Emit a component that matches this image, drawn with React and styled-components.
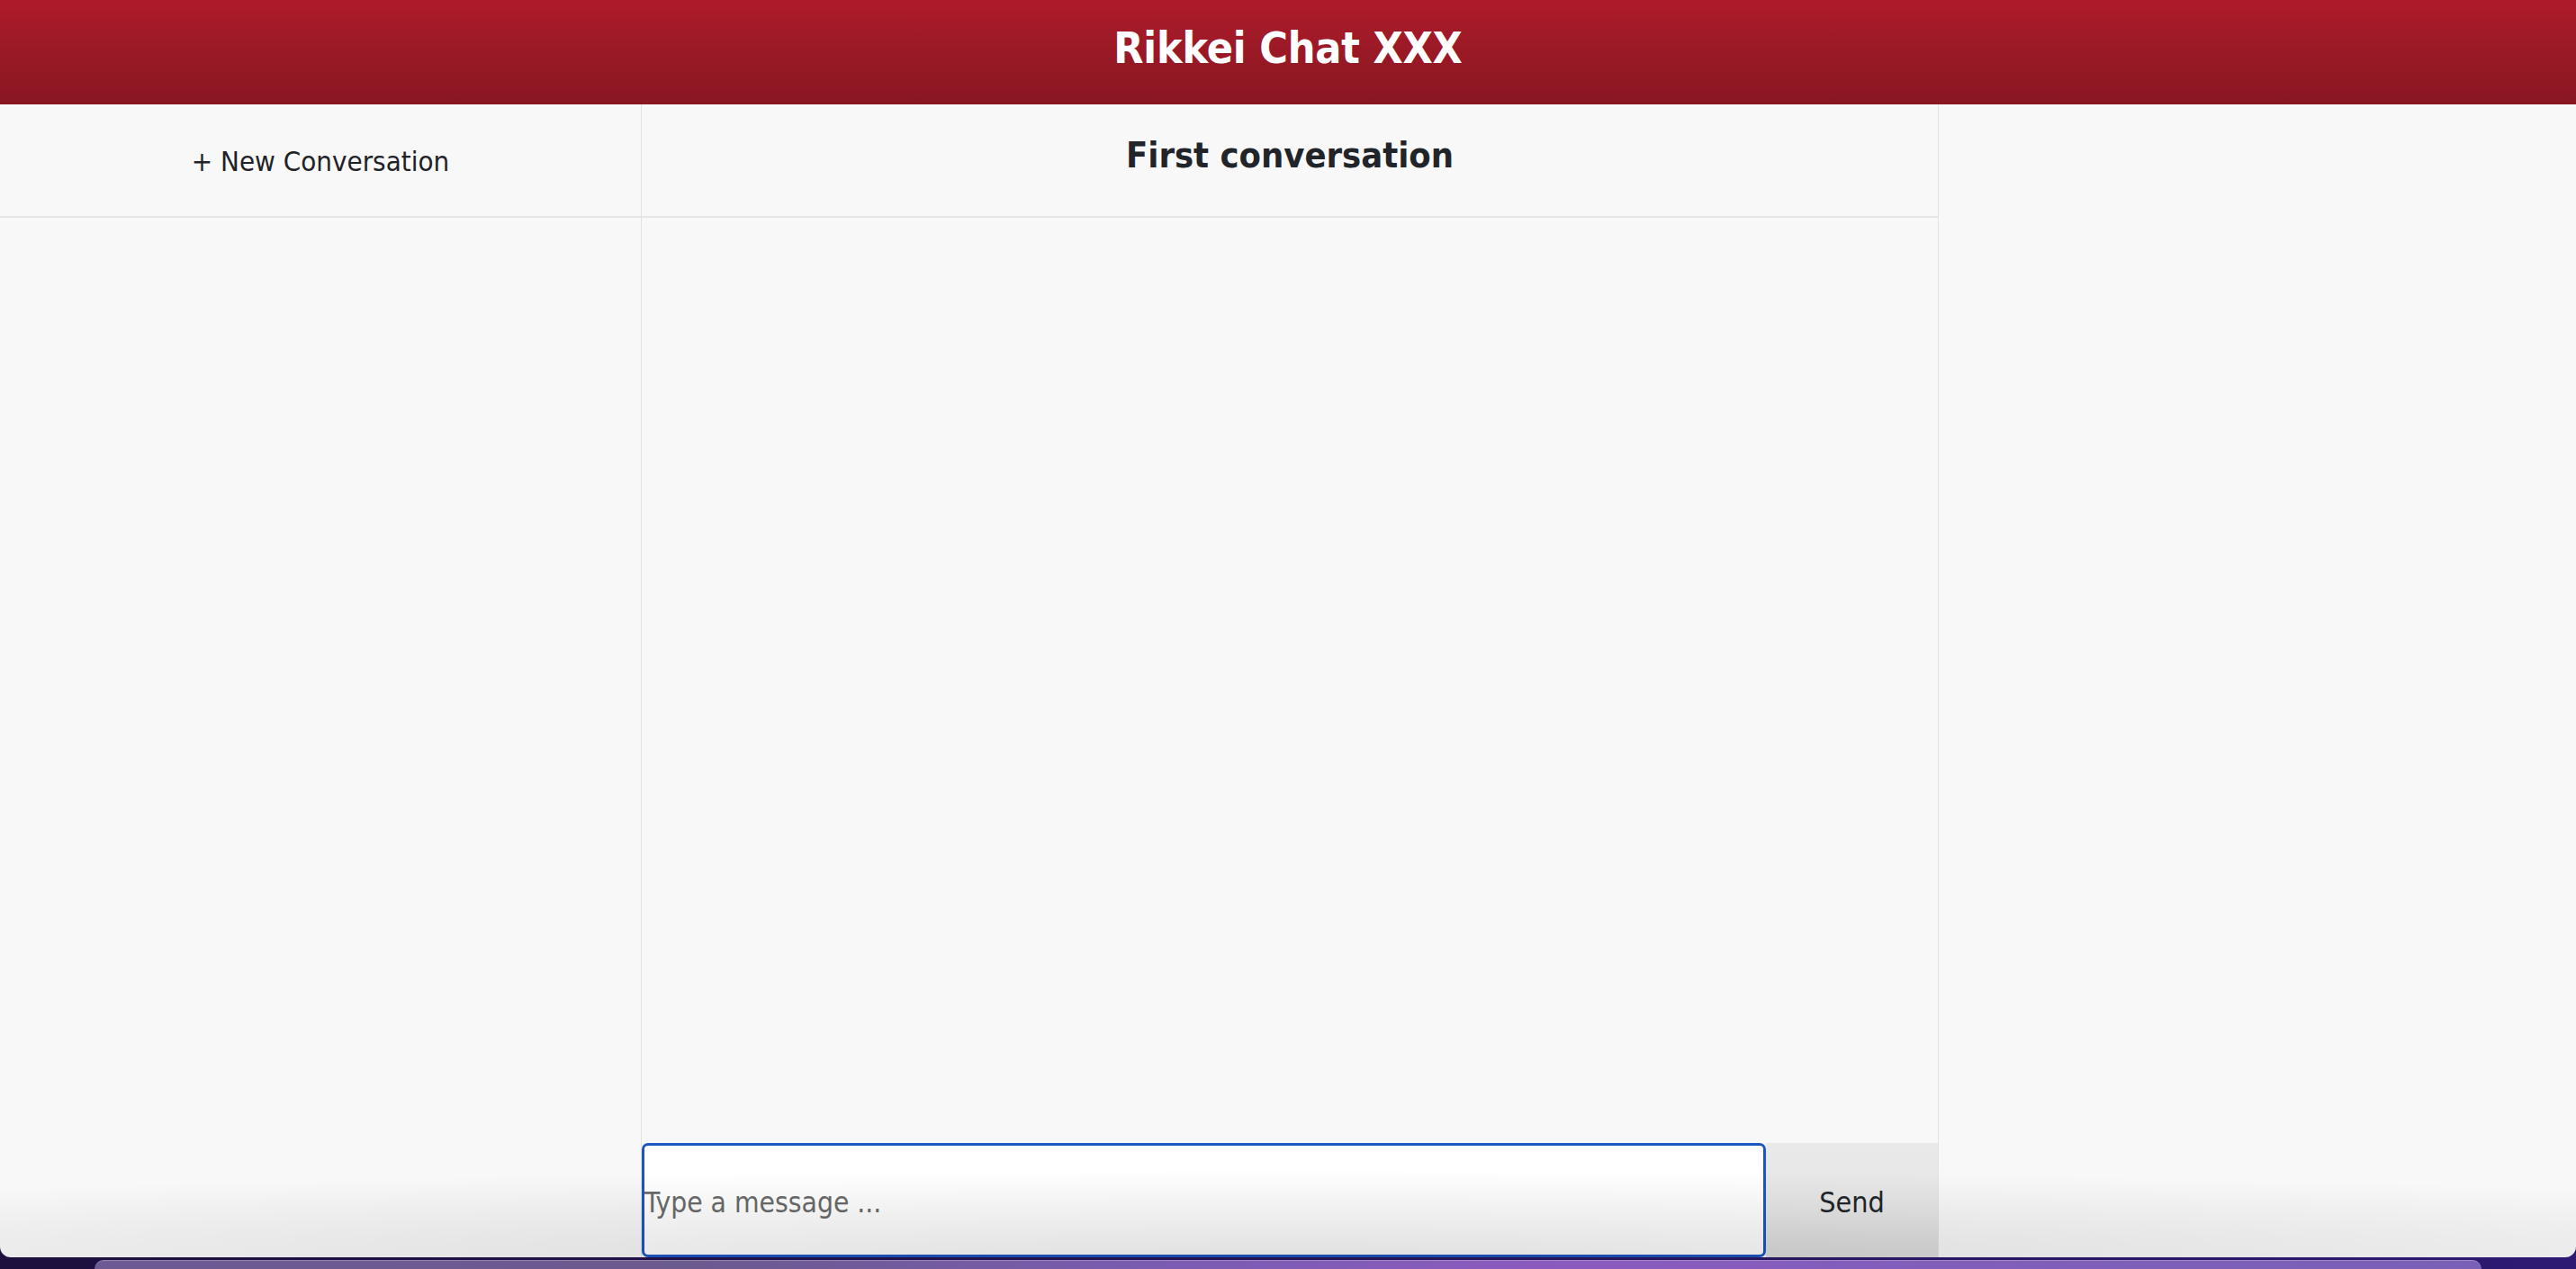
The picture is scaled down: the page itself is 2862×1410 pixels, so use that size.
import React from "react";
import styled, { createGlobalStyle } from "styled-components";

const Global = createGlobalStyle`
  html, body { margin: 0; padding: 0; }
  body {
    background: linear-gradient(90deg, #1d0f3e 0%, #241352 50%, #2e1a72 100%);
    font-family: "DejaVu Sans Condensed", "DejaVu Sans", Verdana, sans-serif;
    font-stretch: condensed;
    overflow: hidden;
  }
`;

const Screen = styled.div`
  width: 2862px;
  height: 1410px;
  display: flex;
  flex-direction: column;
`;

const Window = styled.div`
  position: relative;
  height: 1397px;
  flex: none;
  display: flex;
  flex-direction: column;
  background: #f8f8f8;
  border-radius: 0 0 12px 12px;
  overflow: hidden;
  box-sizing: border-box;
`;

const BottomShade = styled.div`
  position: absolute;
  left: 0;
  right: 0;
  bottom: 0;
  height: 130px;
  pointer-events: none;
  background: radial-gradient(110% 100% at 50% 100%, rgba(0,0,0,0.12) 0%, rgba(0,0,0,0.05) 45%, rgba(0,0,0,0) 75%);
`;

const Header = styled.header`
  height: 116px;
  flex: none;
  display: flex;
  align-items: center;
  justify-content: center;
  padding-bottom: 10px;
  box-sizing: border-box;
  background: linear-gradient(180deg, #ae1b2a 0%, #9a1926 50%, #881722 100%);
`;

const Title = styled.h1`
  margin: 0;
  color: #ffffff;
  font-size: 48px;
  font-weight: 700;
  letter-spacing: -0.2px;
`;

const Body = styled.div`
  flex: 1;
  display: grid;
  grid-template-columns: 713px 1441px 1fr;
  min-height: 0;
`;

const Sidebar = styled.aside`
  border-right: 1px solid #e2e2e2;
  display: flex;
  flex-direction: column;
`;

const ColumnHead = styled.div`
  height: 126px;
  flex: none;
  box-sizing: border-box;
  border-bottom: 2px solid #e6e6e6;
  display: flex;
  align-items: center;
  justify-content: center;
  padding-bottom: ${(p) => (p.$raised ? "12px" : "0")};
`;

const NewButton = styled.button`
  background: none;
  border: none;
  font-family: inherit;
  font-stretch: condensed;
  font-size: 31px;
  color: #1f2226;
  cursor: pointer;
  padding: 0;
  margin-top: 2px;
`;

const ChatPane = styled.main`
  border-right: 1px solid #e2e2e2;
  display: flex;
  flex-direction: column;
  min-height: 0;
`;

const ChatTitle = styled.h3`
  margin: 0;
  font-size: 39.5px;
  font-weight: 700;
  color: #212529;
`;

const Messages = styled.div`
  flex: 1;
`;

const Composer = styled.form`
  height: 127px;
  flex: none;
  display: flex;
  margin: 0;
`;

const MessageInput = styled.input`
  flex: 1;
  min-width: 0;
  box-sizing: border-box;
  border: 3px solid #1b56c1;
  border-radius: 7px;
  background: #ffffff;
  padding: 4px 0 0 0;
  font-family: inherit;
  font-stretch: condensed;
  font-size: 31.5px;
  color: #222;
  outline: none;
  &::placeholder { color: #6a6a6a; }
`;

const SendButton = styled.button`
  width: 191px;
  flex: none;
  border: none;
  background: linear-gradient(180deg, #e9e9e9 0%, #e6e6e6 60%, #dcdcdc 100%);
  font-family: inherit;
  font-stretch: condensed;
  font-size: 32px;
  color: #212529;
  padding: 4px 0 0 0;
  cursor: pointer;
`;

const RightPane = styled.section``;

const Desktop = styled.div`
  flex: 1;
  display: flex;
  padding: 3px 105px 0 105px;
`;

const Dock = styled.div`
  flex: 1;
  border-radius: 22px 22px 0 0;
  background: linear-gradient(90deg, #6d5a93 0%, #6b5a8e 25%, #7b5cb2 45%, #8a5bbd 60%, #7e5fb9 85%, #7a60b6 100%);
  border-top: 1px solid rgba(255,255,255,0.25);
`;

export default function App() {
  return (
    <Screen>
      <Global />
      <Window>
        <Header>
          <Title>Rikkei Chat XXX</Title>
        </Header>
        <Body>
          <Sidebar>
            <ColumnHead>
              <NewButton type="button">+ New Conversation</NewButton>
            </ColumnHead>
          </Sidebar>
          <ChatPane>
            <ColumnHead $raised>
              <ChatTitle>First conversation</ChatTitle>
            </ColumnHead>
            <Messages />
            <Composer onSubmit={(e) => e.preventDefault()}>
              <MessageInput placeholder="Type a message ..." />
              <SendButton type="submit">Send</SendButton>
            </Composer>
          </ChatPane>
          <RightPane />
        </Body>
        <BottomShade />
      </Window>
      <Desktop>
        <Dock />
      </Desktop>
    </Screen>
  );
}
